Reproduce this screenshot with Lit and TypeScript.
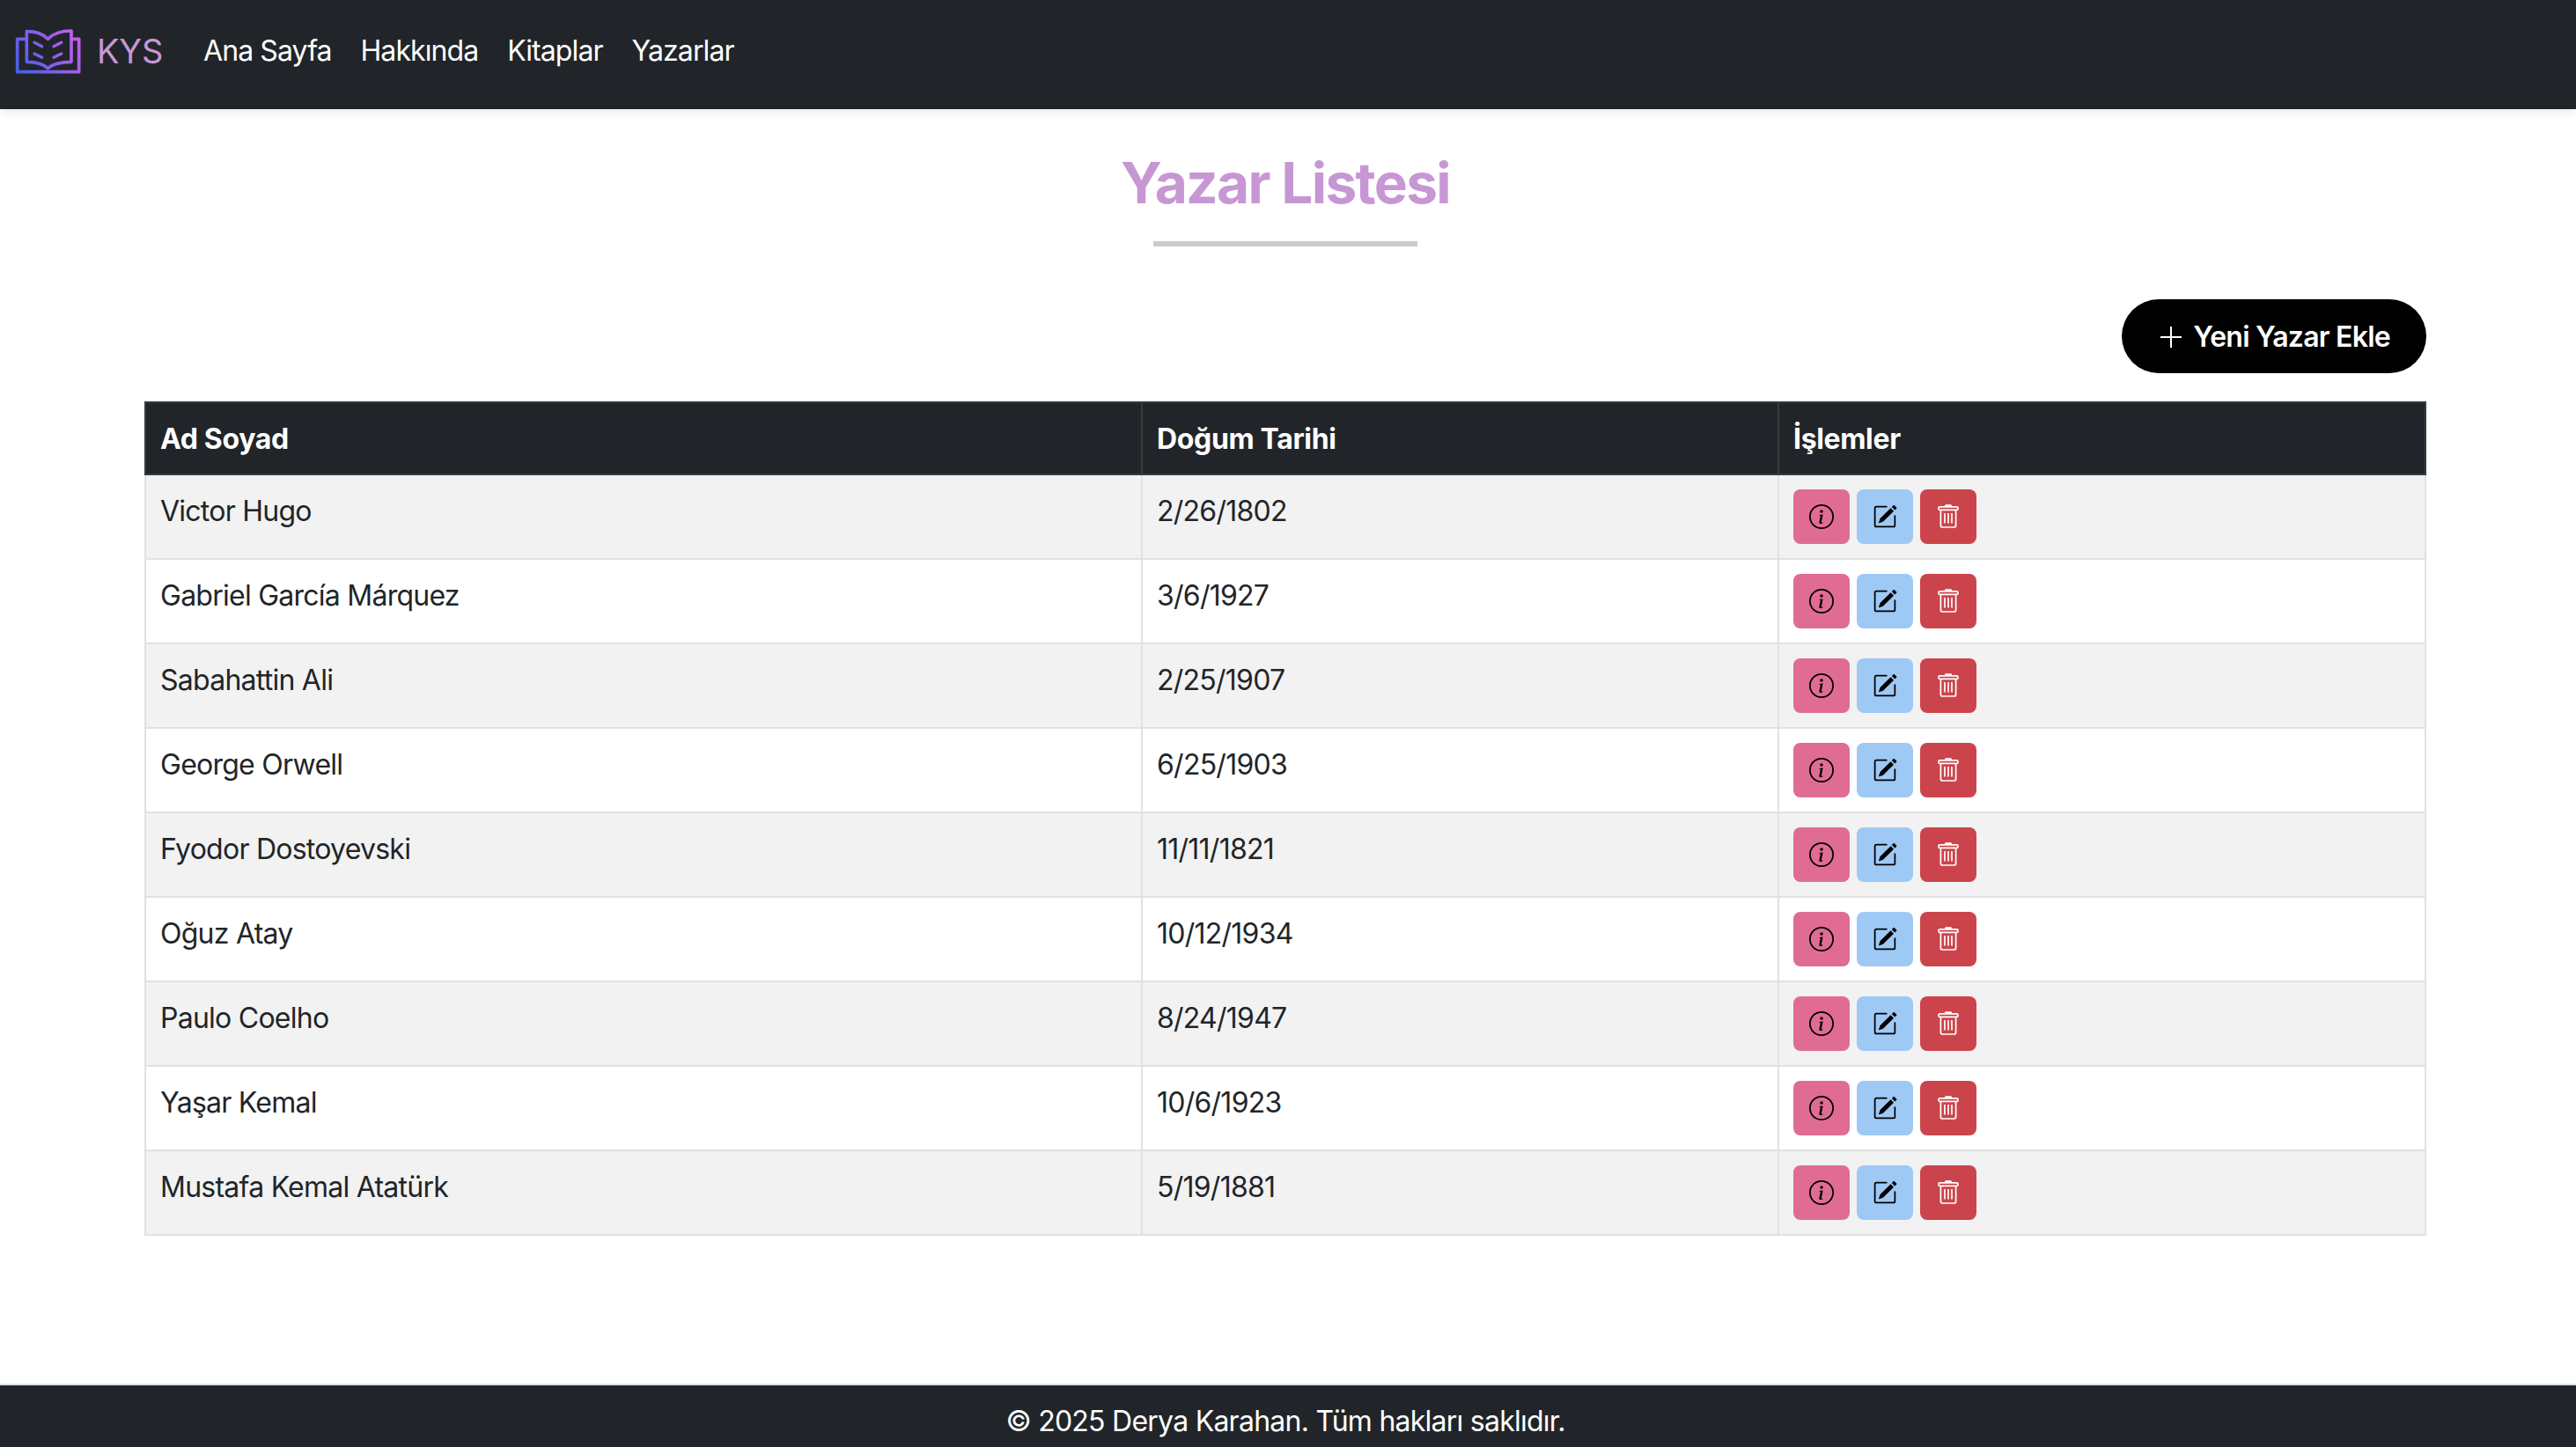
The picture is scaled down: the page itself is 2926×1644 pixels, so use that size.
import { LitElement, html, css } from 'lit';
import { customElement } from 'lit/decorators.js';

const authors = [
  ['Victor Hugo', '2/26/1802'],
  ['Gabriel García Márquez', '3/6/1927'],
  ['Sabahattin Ali', '2/25/1907'],
  ['George Orwell', '6/25/1903'],
  ['Fyodor Dostoyevski', '11/11/1821'],
  ['Oğuz Atay', '10/12/1934'],
  ['Paulo Coelho', '8/24/1947'],
  ['Yaşar Kemal', '10/6/1923'],
  ['Mustafa Kemal Atatürk', '5/19/1881'],
];

const logo = html`<svg class="logo" viewBox="20 35 228 156" fill="none" stroke="url(#logoGrad)" stroke-linecap="round" stroke-linejoin="round">
  <defs>
    <linearGradient id="logoGrad" gradientUnits="userSpaceOnUse" x1="20" y1="190" x2="248" y2="35">
      <stop offset="0" stop-color="#3f5fe8"></stop>
      <stop offset="1" stop-color="#d65df0"></stop>
    </linearGradient>
  </defs>
  <path stroke-width="11" d="M60 46C85 46 115 54 132 72C150 54 180 44 212 44V150C180 150 150 155 132 172C115 155 85 150 60 150Z"></path>
  <path stroke-width="11" d="M60 72H28V184H238V72H212"></path>
  <path stroke-width="10" d="M86 84L112 97M86 122L112 135M152 97L178 84M152 135L178 122"></path>
</svg>`;

const infoIcon = html`<svg class="icon" viewBox="0 0 16 16" fill="currentColor">
  <path d="M8 15A7 7 0 1 1 8 1a7 7 0 0 1 0 14zm0 1A8 8 0 1 0 8 0a8 8 0 0 0 0 16z"></path>
  <path d="m8.93 6.588-2.29.287-.082.38.45.083c.294.07.352.176.288.469l-.738 3.468c-.194.897.105 1.319.808 1.319.545 0 1.178-.252 1.465-.598l.088-.42c-.2.176-.492.246-.686.246-.275 0-.375-.193-.304-.533L8.93 6.588zM9 4.5a1 1 0 1 1-2 0 1 1 0 0 1 2 0z"></path>
</svg>`;

const editIcon = html`<svg class="icon" viewBox="0 0 16 16" fill="currentColor">
  <path d="M15.502 1.94a.5.5 0 0 1 0 .706L14.459 3.69l-2-2L13.502.646a.5.5 0 0 1 .707 0l1.293 1.293zm-1.75 2.456-2-2L4.939 9.21a.5.5 0 0 0-.121.196l-.805 2.414a.25.25 0 0 0 .316.316l2.414-.805a.5.5 0 0 0 .196-.12l6.813-6.814z"></path>
  <path d="M1 13.5A1.5 1.5 0 0 0 2.5 15h11a1.5 1.5 0 0 0 1.5-1.5v-6a.5.5 0 0 0-1 0v6a.5.5 0 0 1-.5.5h-11a.5.5 0 0 1-.5-.5v-11a.5.5 0 0 1 .5-.5H9a.5.5 0 0 0 0-1H2.5A1.5 1.5 0 0 0 1 2.5v11z"></path>
</svg>`;

const trashIcon = html`<svg class="trash" viewBox="0 0 24 27" fill="none" stroke="currentColor" stroke-width="1.7" stroke-linejoin="round">
  <path d="M9 2.5V1.2H15V2.5"></path>
  <rect x="1" y="2.8" width="22" height="3.6" rx="1.4"></rect>
  <path d="M3.4 6.4V24a2 2 0 0 0 2 2H18.6a2 2 0 0 0 2-2V6.4"></path>
  <path d="M8 10V21.5M12 10V21.5M16 10V21.5"></path>
</svg>`;

@customElement('app-root')
export class AppRoot extends LitElement {
  static styles = css`
    :host {
      display: flex;
      flex-direction: column;
      min-height: 1644px;
      font-family: Inter, "Liberation Sans", sans-serif;
      font-size: 32px;
      line-height: 48px;
      letter-spacing: -0.75px;
      color: #212529;
      background: #fff;
    }

    .navbar {
      display: flex;
      align-items: center;
      height: 116px;
      padding: 0 0 8px 17px;
      background: #212529;
      box-shadow: 0 4px 10px rgba(0, 0, 0, 0.08);
      position: relative;
    }

    .logo {
      width: 76px;
      height: 52px;
      flex: none;
    }

    .brand {
      margin-left: 17px;
      margin-right: 29.5px;
      font-size: 38px;
      letter-spacing: -0.2px;
      color: #c797d4;
    }

    .nav-link {
      padding: 0 16.4px;
      letter-spacing: -0.9px;
      color: #fff;
    }

    main {
      flex: 1;
      padding: 36px 170px 0 164px;
    }

    h1 {
      margin: 0;
      font-size: 64px;
      line-height: 96px;
      font-weight: 700;
      letter-spacing: -1.7px;
      text-align: center;
      color: #c797d4;
    }

    .rule {
      width: 300px;
      height: 6px;
      margin: 18px auto 60px;
      background: #ccc;
    }

    .actions {
      display: flex;
      justify-content: flex-end;
      margin-bottom: 32px;
    }

    .add-btn {
      display: flex;
      align-items: center;
      gap: 13px;
      height: 84px;
      padding: 1px 41px 0 44.5px;
      box-sizing: border-box;
      border-radius: 42px;
      background: #000;
      color: #fff;
      font-weight: 600;
    }

    .plus {
      width: 24px;
      height: 24px;
    }

    table {
      width: 100%;
      table-layout: fixed;
      border-collapse: collapse;
    }

    .col-name {
      width: 1132px;
    }

    .col-date {
      width: 723px;
    }

    th, td {
      padding: 16px;
      text-align: left;
      vertical-align: top;
      border: 2px solid #dee2e6;
    }

    td.text {
      padding-top: 17px;
      padding-bottom: 15px;
    }

    th {
      padding-top: 17px;
      padding-bottom: 15px;
      background: #212529;
      border-color: #373b3e;
      color: #fff;
      font-weight: 700;
      letter-spacing: -0.35px;
    }

    tbody tr:nth-child(odd) td {
      background: #f2f2f2;
    }

    .row-actions {
      display: flex;
      gap: 8px;
    }

    .btn {
      display: flex;
      align-items: center;
      justify-content: center;
      width: 64px;
      height: 62px;
      border-radius: 8px;
    }

    .info {
      background: #e06c94;
      color: #000;
    }

    .edit {
      background: #9ec9f5;
      color: #000;
    }

    .delete {
      background: #cc444b;
      color: #fff;
    }

    .icon {
      width: 28px;
      height: 28px;
    }

    .trash {
      width: 24px;
      height: 27px;
      margin-bottom: 2px;
    }

    footer {
      height: 70px;
      padding-right: 6px;
      border-top: 2px solid #dee2e6;
      background: #212529;
      color: #fff;
      text-align: center;
      line-height: 81px;
      overflow: hidden;
    }
  `;

  render() {
    return html`
      <nav class="navbar">
        ${logo}
        <span class="brand">KYS</span>
        <a class="nav-link">Ana Sayfa</a>
        <a class="nav-link">Hakkında</a>
        <a class="nav-link">Kitaplar</a>
        <a class="nav-link">Yazarlar</a>
      </nav>
      <main>
        <h1>Yazar Listesi</h1>
        <div class="rule"></div>
        <div class="actions">
          <a class="add-btn">
            <svg class="plus" viewBox="0 0 24 24" fill="none" stroke="currentColor" stroke-width="2"><path d="M12 0V24M0 12H24"></path></svg>
            Yeni Yazar Ekle
          </a>
        </div>
        <table>
          <colgroup>
            <col class="col-name" />
            <col class="col-date" />
            <col />
          </colgroup>
          <thead>
            <tr>
              <th>Ad Soyad</th>
              <th>Doğum Tarihi</th>
              <th>İşlemler</th>
            </tr>
          </thead>
          <tbody>
            ${authors.map(
              ([name, born]) => html`
                <tr>
                  <td class="text">${name}</td>
                  <td class="text">${born}</td>
                  <td>
                    <div class="row-actions">
                      <a class="btn info">${infoIcon}</a>
                      <a class="btn edit">${editIcon}</a>
                      <a class="btn delete">${trashIcon}</a>
                    </div>
                  </td>
                </tr>
              `
            )}
          </tbody>
        </table>
      </main>
      <footer>© 2025 Derya Karahan. Tüm hakları saklıdır.</footer>
    `;
  }
}
